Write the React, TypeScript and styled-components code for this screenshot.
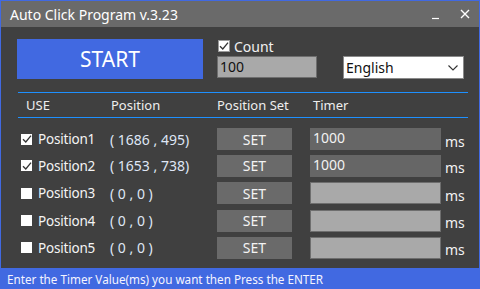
import React from "react";
import styled, { createGlobalStyle } from "styled-components";

const Global = createGlobalStyle`
  html, body { margin: 0; padding: 0; background: #404040; }
  * { box-sizing: border-box; }
  body { font-family: "Noto Sans", "Open Sans", sans-serif; }
`;

const Window = styled.div`
  width: 480px;
  height: 289px;
  border: 1px solid #4169e1;
  border-bottom: none;
  display: flex;
  flex-direction: column;
  background: #404040;
  color: #f2f2f2;
  overflow: hidden;
`;

const TitleBar = styled.div`
  height: 26px;
  flex: none;
  background: #6a6a6a;
  display: flex;
  align-items: center;
  padding-left: 9px;
  font-size: 14px;
  color: #ffffff;
`;

const TitleText = styled.div`
  flex: 1;
`;

const TitleButton = styled.div`
  width: 28px;
  height: 26px;
  display: flex;
  align-items: center;
  justify-content: center;
`;

const Body = styled.div`
  flex: 1;
  padding: 12px 13px 0 16px;
  display: flex;
  flex-direction: column;
`;

const TopRow = styled.div`
  display: flex;
  align-items: flex-start;
  height: 53px;
`;

const StartButton = styled.button`
  width: 186px;
  height: 40px;
  background: #4169e1;
  border: none;
  color: #ffffff;
  font-family: inherit;
  font-size: 21px;
  padding: 0;
  margin: 0;
`;

const CountBlock = styled.div`
  margin-left: 14px;
  display: flex;
  flex-direction: column;
`;

const CountLabel = styled.label`
  display: flex;
  align-items: center;
  gap: 4px;
  height: 18px;
  margin-top: -2px;
  margin-left: 1px;
  font-size: 14px;
  color: #f0f0f0;
`;

const CountInput = styled.div`
  width: 100px;
  height: 22px;
  margin-top: 1px;
  background: #a9a9a9;
  border: 1px solid #6e6e6e;
  color: #111;
  font-size: 14px;
  line-height: 20px;
  padding-left: 2px;
`;

const Select = styled.div`
  margin-left: 26px;
  margin-top: 17px;
  width: 121px;
  height: 23px;
  background: #ffffff;
  border: 1px solid #8a8a8a;
  color: #111;
  font-size: 14px;
  display: flex;
  align-items: center;
  padding-left: 2px;
  justify-content: space-between;
`;

const Chevron = styled.svg`
  margin-right: 5px;
`;

const Line = styled.div`
  height: 1px;
  width: 450px;
  margin-left: 1px;
  background: #1e90ff;
  flex: none;
`;

const HeaderRow = styled.div`
  display: grid;
  grid-template-columns: 85px 106px 96px 1fr;
  height: 24px;
  align-items: center;
  padding-left: 9px;
  font-size: 13px;
  color: #eeeeee;
`;

const Rows = styled.div`
  display: flex;
  flex-direction: column;
  padding-top: 8px;
`;

const Row = styled.div<{ $h: number }>`
  display: flex;
  align-items: center;
  height: ${(p) => p.$h}px;
`;

const UseCell = styled.div`
  width: 93px;
  display: flex;
  align-items: center;
  padding-left: 4px;
  gap: 6px;
  font-size: 13.5px;
  letter-spacing: -0.2px;
  color: #f4f4f4;
`;

const Box = styled.span`
  width: 11px;
  height: 11px;
  background: #ffffff;
  display: inline-flex;
  align-items: center;
  justify-content: center;
  flex: none;
`;

const BoxCount = styled(Box)`
  width: 12px;
  height: 12px;
  border: 1px solid #9a9a9a;
`;

const PosCell = styled.div`
  width: 107px;
  font-size: 14px;
  color: #dfe6f5;
  white-space: pre;
`;

const SetButton = styled.div`
  width: 75px;
  height: 22px;
  background: #6a6a6a;
  display: flex;
  align-items: center;
  justify-content: center;
  font-size: 14px;
  color: #f4f4f4;
`;

const TimerInput = styled.div<{ $filled: boolean }>`
  margin-left: 18px;
  width: 131px;
  height: 22px;
  background: ${(p) => (p.$filled ? "#666666" : "#a9a9a9")};
  border: 1px solid ${(p) => (p.$filled ? "#666666" : "#6e6e6e")};
  color: #f2f2f2;
  font-size: 14px;
  line-height: 18px;
  padding-left: 2px;
`;

const Ms = styled.div`
  margin-left: 4px;
  font-size: 14px;
  color: #f2f2f2;
  padding-top: 4px;
`;

const StatusBar = styled.div`
  height: 21px;
  flex: none;
  margin: 0 -1px;
  background: #4169e1;
  color: #f4f4ff;
  font-size: 11.7px;
  display: flex;
  align-items: center;
  padding-left: 7px;
`;

const Check = ({ size = 10 }: { size?: number }) => (
  <svg width={size} height={size} viewBox="0 0 10 10">
    <path d="M1 5.2 L3.8 8 L9 1.6" fill="none" stroke="#333" strokeWidth="1.3" />
  </svg>
);

const rows = [
  { name: "Position1", pos: "( 1686 , 495)", checked: true, timer: "1000", h: 26 },
  { name: "Position2", pos: "( 1653 , 738)", checked: true, timer: "1000", h: 27 },
  { name: "Position3", pos: "( 0 , 0 )", checked: false, timer: "", h: 28 },
  { name: "Position4", pos: "( 0 , 0 )", checked: false, timer: "", h: 27 },
  { name: "Position5", pos: "( 0 , 0 )", checked: false, timer: "", h: 27 },
];

export default function App() {
  return (
    <>
      <Global />
      <Window>
        <TitleBar>
          <TitleText>Auto Click Program v.3.23</TitleText>
          <TitleButton>
            <svg width="12" height="12" viewBox="0 0 12 12">
              <path d="M1 10.5 H8" stroke="#fff" strokeWidth="1.2" />
            </svg>
          </TitleButton>
          <TitleButton>
            <svg width="10" height="10" viewBox="0 0 10 10">
              <path d="M1 1 L9 9 M9 1 L1 9" stroke="#fff" strokeWidth="1.4" />
            </svg>
          </TitleButton>
        </TitleBar>
        <Body>
          <TopRow>
            <StartButton>START</StartButton>
            <CountBlock>
              <CountLabel>
                <BoxCount>
                  <Check />
                </BoxCount>
                Count
              </CountLabel>
              <CountInput>100</CountInput>
            </CountBlock>
            <Select>
              English
              <Chevron width="10" height="6" viewBox="0 0 10 6">
                <path d="M0.5 0.5 L5 5 L9.5 0.5" fill="none" stroke="#333" strokeWidth="1.1" />
              </Chevron>
            </Select>
          </TopRow>
          <Line />
          <HeaderRow>
            <span>USE</span>
            <span>Position</span>
            <span>Position Set</span>
            <span>Timer</span>
          </HeaderRow>
          <Line />
          <Rows>
            {rows.map((r) => (
              <Row key={r.name} $h={r.h}>
                <UseCell>
                  <Box>{r.checked && <Check />}</Box>
                  {r.name}
                </UseCell>
                <PosCell>{r.pos}</PosCell>
                <SetButton>SET</SetButton>
                <TimerInput $filled={r.checked}>{r.timer}</TimerInput>
                <Ms>ms</Ms>
              </Row>
            ))}
          </Rows>
        </Body>
        <StatusBar>Enter the Timer Value(ms) you want then Press the ENTER</StatusBar>
      </Window>
    </>
  );
}
